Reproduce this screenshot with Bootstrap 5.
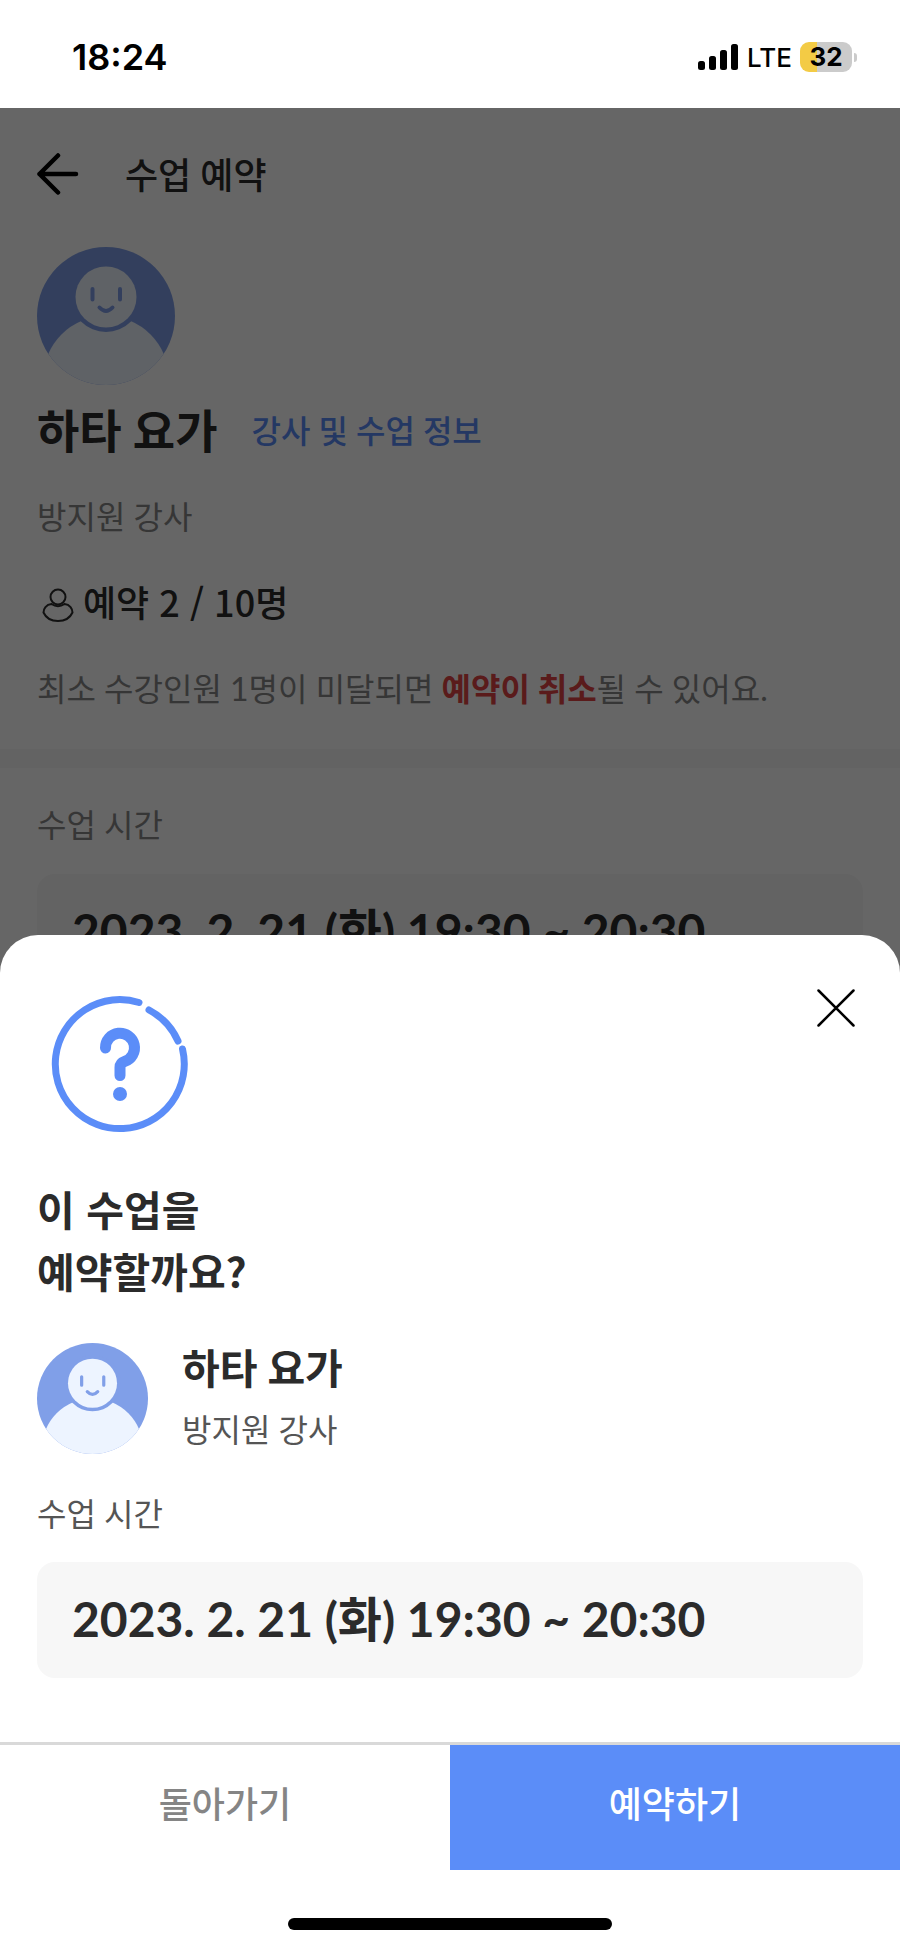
<!DOCTYPE html>
<html lang="ko">
<head>
<meta charset="utf-8">
<meta name="viewport" content="width=device-width, initial-scale=1">
<title>수업 예약</title>
<link href="https://cdn.jsdelivr.net/npm/bootstrap@5.3.0/dist/css/bootstrap.min.css" rel="stylesheet">
<style>
  :root { --ink: #2b2b2b; --brand: #5b8df8; --muted: #888; --soft: #555; --panel: #f7f7f7; }
  body { font-family: Lato, "Noto Sans CJK KR", sans-serif; color: var(--ink); background: #fff; }
  .gutter { padding-left: 37px; padding-right: 37px; }
  .gap-34 { gap: 34px; }
  .mt-36 { margin-top: 36px; }
  .status-bar { height: 108px; padding: 6px 43px 0 72px; font-family: Inter, sans-serif; color: #000; }
  .clock { font-size: 36px; font-weight: 600; line-height: 40px; }
  .carrier { font-size: 26px; font-weight: 500; line-height: 28px; padding-top: 2px; }
  .battery { width: 52px; height: 30px; border-radius: 9px; background: linear-gradient(90deg, #f3cb45 33%, #cbcbcb 33%); font-size: 26px; font-weight: 700; line-height: 30px; margin-right: 2px; }
  .battery-tip { width: 3px; height: 9px; border-radius: 0 4px 4px 0; background: #cbcbcb; }
  .app-bar { height: 139px; gap: 46px; }
  .app-title { font-size: 36px; font-weight: 500; line-height: 52px; padding-top: 2px; }
  .text-body-lg { font-size: 32px; line-height: 48px; }
  .muted { color: var(--muted); }
  .soft { color: var(--soft); }
  .class-row { margin-top: 14px; margin-bottom: 30px; }
  .class-name { font-size: 46px; line-height: 64px; font-weight: 700; }
  .info-link { font-size: 32px; line-height: 48px; font-weight: 500; color: var(--brand); text-decoration: none; }
  .count-row { margin-top: 34px; margin-bottom: 38px; }
  .count { font-family: "Noto Sans CJK KR", sans-serif; font-size: 36px; line-height: 52px; font-weight: 500; }
  .warn { color: #e04444; font-weight: 700; }
  .divider { height: 19px; margin-top: 36px; margin-bottom: 33px; background: var(--panel); }
  .time-label { margin-bottom: 25px; }
  .time-panel { background: var(--panel); border-radius: 18px; padding: 25px 35px 27px; font-size: 48px; line-height: 64px; font-weight: 700; }
  .backdrop { background: rgba(0, 0, 0, .6); }
  .sheet { border-radius: 38px 38px 0 0; background: #fff; }
  .sheet-head { padding-top: 54px; }
  .question { font-family: "Noto Sans CJK KR", sans-serif; font-size: 41px; line-height: 62px; font-weight: 700; margin: 38px 0 42px; }
  .sheet-name { font-size: 41px; line-height: 50px; font-weight: 700; margin-bottom: 12px; }
  .action-row { border-top: 3px solid #d9d9d9; margin-top: 64px; }
  .action { width: 50%; height: 125px; border: 0; border-radius: 0; padding: 0 0 8px; font-size: 36px; font-weight: 500; line-height: 52px; }
  .action-back, .action-back:hover { color: #858585; background: #fff; }
  .action-go, .action-go:hover { color: #fff; background: var(--brand); }
  .home-zone { height: 78px; padding-top: 48px; }
  .home-bar { width: 36%; height: 12px; background: #000; }
</style>
</head>
<body>
<svg class="position-absolute" width="0" height="0" aria-hidden="true">
  <clipPath id="disc"><circle cx="69" cy="69" r="69"/></clipPath>
  <symbol id="avatar" viewBox="0 0 138 138">
    <g clip-path="url(#disc)">
      <rect width="138" height="138" fill="#809fe8"/>
      <circle cx="69" cy="132" r="63" fill="#edf4ff"/>
      <circle cx="69" cy="50" r="35" fill="#809fe8"/>
      <circle cx="69" cy="50" r="30.500" fill="#edf4ff"/>
      <path d="M55.500 42v10.500M83 42v10.500M62.500 60.500q6.500 7 13 0" fill="none" stroke="#809fe8" stroke-width="4" stroke-linecap="round"/>
    </g>
  </symbol>
</svg>

<div class="d-flex flex-column min-vh-100">
  <header class="status-bar d-flex align-items-center justify-content-between">
    <span class="clock">18:24</span>
    <div class="d-flex align-items-center">
      <svg class="me-2" width="42" height="28" viewBox="0 0 42 28" aria-hidden="true">
        <rect x="1" y="18" width="7" height="9" rx="2.500"/><rect x="12" y="13" width="7" height="14" rx="2.500"/><rect x="23" y="7" width="7" height="20" rx="2.500"/><rect x="34" y="1" width="7" height="26" rx="2.500"/>
      </svg>
      <span class="carrier me-2">LTE</span>
      <span class="battery text-center">32</span>
      <span class="battery-tip"></span>
    </div>
  </header>

  <div class="position-relative flex-grow-1 d-flex flex-column overflow-hidden">
    <main>
      <div class="app-bar gutter d-flex align-items-center pb-2">
        <button type="button" class="btn p-0 border-0 lh-1" aria-label="뒤로">
          <svg width="42" height="42" viewBox="0 0 42 42" fill="none" stroke="#000" stroke-width="4.500" stroke-linecap="round" stroke-linejoin="round"><path d="M21 2.500L2.500 21L21 39.500M2.500 21H39"/></svg>
        </button>
        <h1 class="app-title mb-0">수업 예약</h1>
      </div>
      <section class="gutter">
        <svg class="d-block" width="138" height="138" role="img" aria-label="강사"><use href="#avatar"/></svg>
        <div class="class-row gap-34 d-flex align-items-center">
          <h2 class="class-name mb-0">하타 요가</h2>
          <a class="info-link" href="#">강사 및 수업 정보</a>
        </div>
        <p class="text-body-lg muted mb-0">방지원 강사</p>
        <div class="count-row d-flex align-items-center gap-1">
          <svg class="mt-2" width="42" height="36" viewBox="0 0 42 36" fill="none" stroke="#2b2b2b" stroke-width="2" aria-hidden="true"><circle cx="21" cy="10" r="7.500"/><path d="M14.500 17Q21 21.500 27.500 17C33 17.500 35.500 22 35.500 25.500C33 31 28 34 21 34S9 31 6.500 25.500C6.500 22 9 17.500 14.500 17Z"/></svg>
          <span class="count">예약 2 / 10명</span>
        </div>
        <p class="text-body-lg muted mb-0">최소 수강인원 1명이 미달되면 <strong class="warn">예약이 취소</strong>될 수 있어요.</p>
      </section>
      <div class="divider"></div>
      <section class="gutter">
        <h3 class="time-label text-body-lg muted fw-normal">수업 시간</h3>
        <div class="time-panel">2023. 2. 21 (화) 19:30 ~ 20:30</div>
      </section>
    </main>
    <div class="backdrop position-absolute top-0 start-0 w-100 h-100"></div>

    <div class="sheet position-absolute bottom-0 start-0 w-100" role="dialog" aria-modal="true" aria-labelledby="ask">
      <div class="gutter">
        <div class="sheet-head d-flex justify-content-between align-items-start">
          <svg class="ms-3 overflow-visible" width="136" height="150" viewBox="2 -7 136 150" fill="none" stroke="#5b8df8" aria-hidden="true">
            <path d="M88 6.500A64.500 64.500 0 1 0 131.500 53" stroke-width="7" stroke-linecap="round"/>
            <path d="M98 14A64.500 64.500 0 0 1 127 45" stroke-width="7" stroke-linecap="round"/>
            <path d="M54.500 52a14.500 14.500 0 1 1 19 13.500q-4.500 1.500-4.500 6v8" stroke-width="11" stroke-linecap="round"/>
            <circle cx="69" cy="98" r="7" fill="#5b8df8" stroke="none"/>
          </svg>
          <button type="button" class="btn p-0 border-0 lh-1 me-2" aria-label="닫기">
            <svg width="38" height="38" viewBox="0 0 38 38" stroke="#000" stroke-width="2.500" stroke-linecap="round"><path d="M1.500 1.500l35 35M36.500 1.500l-35 35"/></svg>
          </button>
        </div>
        <h2 class="question" id="ask">이 수업을<br>예약할까요?</h2>
        <div class="d-flex align-items-center gap-34">
          <svg width="111" height="111" viewBox="0 0 138 138" role="img" aria-label="강사"><use href="#avatar"/></svg>
          <div>
            <div class="sheet-name">하타 요가</div>
            <div class="text-body-lg soft">방지원 강사</div>
          </div>
        </div>
        <h3 class="time-label text-body-lg soft fw-normal mt-36 mb-4">수업 시간</h3>
        <div class="time-panel">2023. 2. 21 (화) 19:30 ~ 20:30</div>
      </div>
      <div class="action-row d-flex">
        <button type="button" class="btn action action-back">돌아가기</button>
        <button type="button" class="btn action action-go">예약하기</button>
      </div>
      <div class="home-zone"><div class="home-bar rounded-pill mx-auto"></div></div>
    </div>
  </div>
</div>
<script src="https://cdn.jsdelivr.net/npm/bootstrap@5.3.0/dist/js/bootstrap.bundle.min.js"></script>
</body>
</html>
